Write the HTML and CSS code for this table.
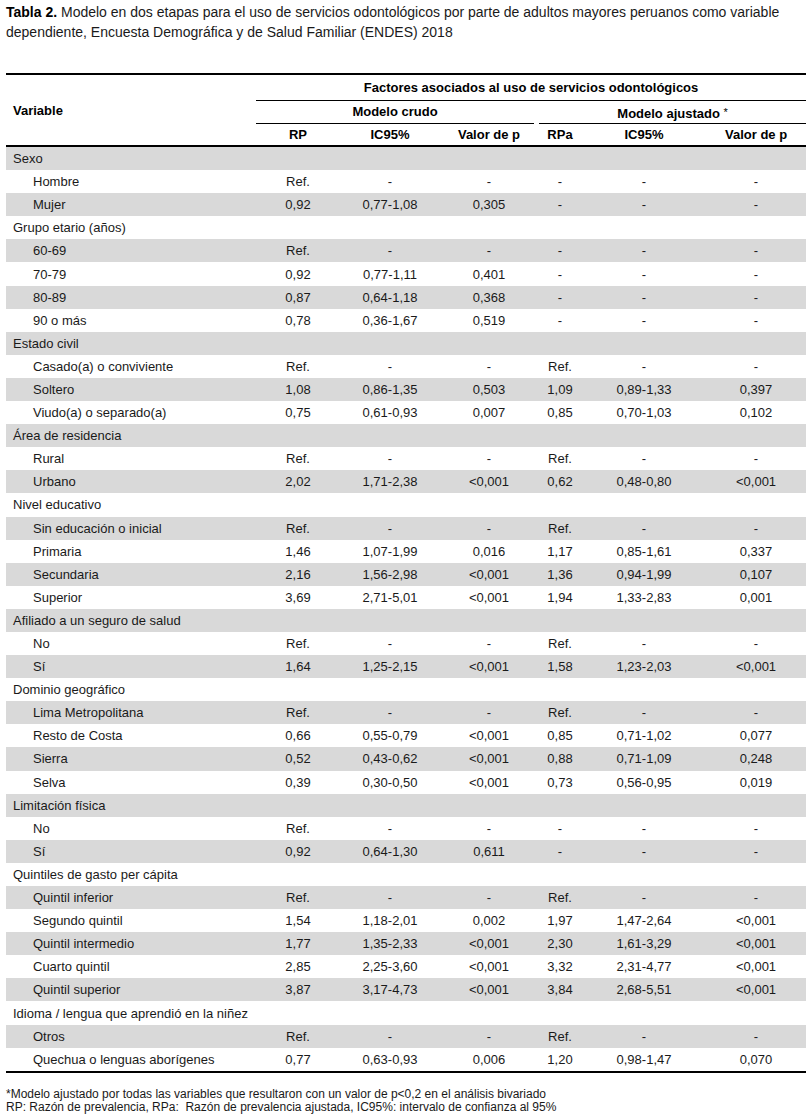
FILE: index.html
```html
<!DOCTYPE html>
<html lang="es">
<head>
<meta charset="utf-8">
<title>Tabla 2</title>
<link rel="stylesheet" href="styles.css">
</head>
<body>
<p class="caption"><span class="caption-label">Tabla 2.</span> Modelo en dos etapas para el uso de servicios odontológicos por parte de adultos mayores peruanos como variable dependiente, Encuesta Demográfica y de Salud Familiar (ENDES) 2018</p>

<table class="tbl">
  <colgroup>
    <col class="c-var"><col class="c-rp"><col class="c-ic1"><col class="c-p1"><col class="c-rpa"><col class="c-ic2"><col class="c-p2">
  </colgroup>
  <thead>
    <tr>
      <th class="h-var" rowspan="3">Variable</th>
      <th class="h-top" colspan="6"><div class="line-top">Factores asociados al uso de servicios odontológicos</div></th>
    </tr>
    <tr>
      <th class="h-grp" colspan="3"><div class="line-grp line-crudo">Modelo crudo</div></th>
      <th class="h-grp" colspan="3"><div class="line-grp line-ajust">Modelo ajustado <span class="ast">*</span></div></th>
    </tr>
    <tr class="h-cols">
      <th>RP</th><th>IC95%</th><th>Valor de p</th><th>RPa</th><th>IC95%</th><th>Valor de p</th>
    </tr>
  </thead>
  <tbody>
    <tr><td class="cat" colspan="7">Sexo</td></tr>
    <tr><td class="sub">Hombre</td><td>Ref.</td><td>-</td><td>-</td><td>-</td><td>-</td><td>-</td></tr>
    <tr><td class="sub">Mujer</td><td>0,92</td><td>0,77-1,08</td><td>0,305</td><td>-</td><td>-</td><td>-</td></tr>
    <tr><td class="cat" colspan="7">Grupo etario (años)</td></tr>
    <tr><td class="sub">60-69</td><td>Ref.</td><td>-</td><td>-</td><td>-</td><td>-</td><td>-</td></tr>
    <tr><td class="sub">70-79</td><td>0,92</td><td>0,77-1,11</td><td>0,401</td><td>-</td><td>-</td><td>-</td></tr>
    <tr><td class="sub">80-89</td><td>0,87</td><td>0,64-1,18</td><td>0,368</td><td>-</td><td>-</td><td>-</td></tr>
    <tr><td class="sub">90 o más</td><td>0,78</td><td>0,36-1,67</td><td>0,519</td><td>-</td><td>-</td><td>-</td></tr>
    <tr><td class="cat" colspan="7">Estado civil</td></tr>
    <tr><td class="sub">Casado(a) o conviviente</td><td>Ref.</td><td>-</td><td>-</td><td>Ref.</td><td>-</td><td>-</td></tr>
    <tr><td class="sub">Soltero</td><td>1,08</td><td>0,86-1,35</td><td>0,503</td><td>1,09</td><td>0,89-1,33</td><td>0,397</td></tr>
    <tr><td class="sub">Viudo(a) o separado(a)</td><td>0,75</td><td>0,61-0,93</td><td>0,007</td><td>0,85</td><td>0,70-1,03</td><td>0,102</td></tr>
    <tr><td class="cat" colspan="7">Área de residencia</td></tr>
    <tr><td class="sub">Rural</td><td>Ref.</td><td>-</td><td>-</td><td>Ref.</td><td>-</td><td>-</td></tr>
    <tr><td class="sub">Urbano</td><td>2,02</td><td>1,71-2,38</td><td>&lt;0,001</td><td>0,62</td><td>0,48-0,80</td><td>&lt;0,001</td></tr>
    <tr><td class="cat" colspan="7">Nivel educativo</td></tr>
    <tr><td class="sub">Sin educación o inicial</td><td>Ref.</td><td>-</td><td>-</td><td>Ref.</td><td>-</td><td>-</td></tr>
    <tr><td class="sub">Primaria</td><td>1,46</td><td>1,07-1,99</td><td>0,016</td><td>1,17</td><td>0,85-1,61</td><td>0,337</td></tr>
    <tr><td class="sub">Secundaria</td><td>2,16</td><td>1,56-2,98</td><td>&lt;0,001</td><td>1,36</td><td>0,94-1,99</td><td>0,107</td></tr>
    <tr><td class="sub">Superior</td><td>3,69</td><td>2,71-5,01</td><td>&lt;0,001</td><td>1,94</td><td>1,33-2,83</td><td>0,001</td></tr>
    <tr><td class="cat" colspan="7">Afiliado a un seguro de salud</td></tr>
    <tr><td class="sub">No</td><td>Ref.</td><td>-</td><td>-</td><td>Ref.</td><td>-</td><td>-</td></tr>
    <tr><td class="sub">Sí</td><td>1,64</td><td>1,25-2,15</td><td>&lt;0,001</td><td>1,58</td><td>1,23-2,03</td><td>&lt;0,001</td></tr>
    <tr><td class="cat" colspan="7">Dominio geográfico</td></tr>
    <tr><td class="sub">Lima Metropolitana</td><td>Ref.</td><td>-</td><td>-</td><td>Ref.</td><td>-</td><td>-</td></tr>
    <tr><td class="sub">Resto de Costa</td><td>0,66</td><td>0,55-0,79</td><td>&lt;0,001</td><td>0,85</td><td>0,71-1,02</td><td>0,077</td></tr>
    <tr><td class="sub">Sierra</td><td>0,52</td><td>0,43-0,62</td><td>&lt;0,001</td><td>0,88</td><td>0,71-1,09</td><td>0,248</td></tr>
    <tr><td class="sub">Selva</td><td>0,39</td><td>0,30-0,50</td><td>&lt;0,001</td><td>0,73</td><td>0,56-0,95</td><td>0,019</td></tr>
    <tr><td class="cat" colspan="7">Limitación física</td></tr>
    <tr><td class="sub">No</td><td>Ref.</td><td>-</td><td>-</td><td>-</td><td>-</td><td>-</td></tr>
    <tr><td class="sub">Sí</td><td>0,92</td><td>0,64-1,30</td><td>0,611</td><td>-</td><td>-</td><td>-</td></tr>
    <tr><td class="cat" colspan="7">Quintiles de gasto per cápita</td></tr>
    <tr><td class="sub">Quintil inferior</td><td>Ref.</td><td>-</td><td>-</td><td>Ref.</td><td>-</td><td>-</td></tr>
    <tr><td class="sub">Segundo quintil</td><td>1,54</td><td>1,18-2,01</td><td>0,002</td><td>1,97</td><td>1,47-2,64</td><td>&lt;0,001</td></tr>
    <tr><td class="sub">Quintil intermedio</td><td>1,77</td><td>1,35-2,33</td><td>&lt;0,001</td><td>2,30</td><td>1,61-3,29</td><td>&lt;0,001</td></tr>
    <tr><td class="sub">Cuarto quintil</td><td>2,85</td><td>2,25-3,60</td><td>&lt;0,001</td><td>3,32</td><td>2,31-4,77</td><td>&lt;0,001</td></tr>
    <tr><td class="sub">Quintil superior</td><td>3,87</td><td>3,17-4,73</td><td>&lt;0,001</td><td>3,84</td><td>2,68-5,51</td><td>&lt;0,001</td></tr>
    <tr><td class="cat" colspan="7">Idioma / lengua que aprendió en la niñez</td></tr>
    <tr><td class="sub">Otros</td><td>Ref.</td><td>-</td><td>-</td><td>Ref.</td><td>-</td><td>-</td></tr>
    <tr><td class="sub">Quechua o lenguas aborígenes</td><td>0,77</td><td>0,63-0,93</td><td>0,006</td><td>1,20</td><td>0,98-1,47</td><td>0,070</td></tr>
  </tbody>
</table>

<div class="notes">
  <p>*Modelo ajustado por todas las variables que resultaron con un valor de p&lt;0,2 en el análisis bivariado</p>
  <p>RP: Razón de prevalencia, RPa:&nbsp; Razón de prevalencia ajustada, IC95%: intervalo de confianza al 95%</p>
</div>
</body>
</html>
```

FILE: styles.css
```css
html, body {
  margin: 0;
  padding: 0;
  background: #ffffff;
}

body {
  padding: 3px 6px 0 6px;
  font-family: "Liberation Sans", Arial, sans-serif;
  color: #1a1a1a;
}

.caption {
  margin: 0;
  font-size: 14px;
  line-height: 19.5px;
  color: #1a1a1a;
}

.caption-label {
  font-weight: bold;
  color: #000;
}

.tbl {
  margin-top: 31px;
  width: 800px;
  table-layout: fixed;
  border-collapse: separate;
  border-spacing: 0;
  border-top: 2px solid #000;
  border-bottom: 2px solid #000;
  font-size: 13px;
}

.c-var { width: 250px; }
.c-rp  { width: 84px; }
.c-ic1 { width: 100px; }
.c-p1  { width: 98px; }
.c-rpa { width: 44px; }
.c-ic2 { width: 124px; }
.c-p2  { width: 100px; }

.tbl th {
  padding: 0;
  font-weight: bold;
  color: #000;
  text-align: center;
  white-space: nowrap;
}

.tbl th.h-var {
  text-align: left;
  padding-left: 7px;
  vertical-align: middle;
  border-bottom: 2px solid #000;
}

.line-top {
  height: 25px;
  line-height: 25px;
  border-bottom: 1px solid #000;
}

.line-grp {
  height: 22px;
  line-height: 22px;
  border-bottom: 1px solid #000;
}

.line-crudo { margin-right: 4px; }
.line-ajust { margin-left: 1px; }

.ast {
  font-weight: normal;
  font-size: 11px;
  vertical-align: 2px;
}

.h-cols th {
  height: 21px;
  line-height: 21px;
  border-bottom: 2px solid #000;
}

.tbl tbody tr {
  height: 23.1px;
}

.tbl tbody tr:nth-child(odd) {
  background: #d9d9d9;
}

.tbl td {
  padding: 0;
  line-height: 15px;
  text-align: center;
  white-space: nowrap;
  vertical-align: middle;
}

.tbl td.cat {
  text-align: left;
  padding-left: 7px;
}

.tbl td.sub {
  text-align: left;
  padding-left: 27px;
}

.notes {
  margin-top: 15px;
  font-size: 12px;
  line-height: 13px;
  color: #1a1a1a;
}

.notes p {
  margin: 0;
}
```
